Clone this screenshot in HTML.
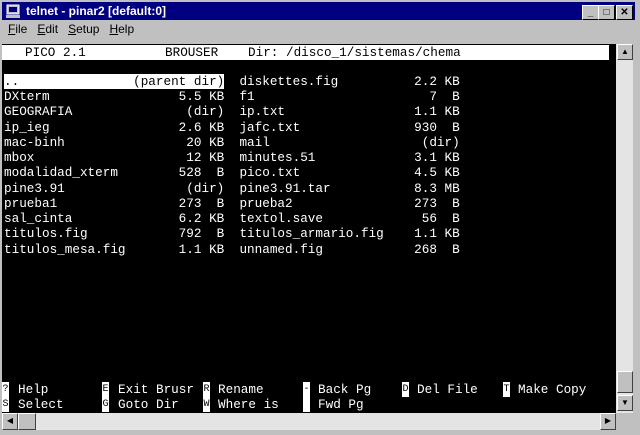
<!DOCTYPE html>
<html><head><style>
body{margin:0;width:640px;height:435px;background:#c0c0c0;overflow:hidden;position:relative;font-family:"Liberation Sans",sans-serif}
#title{position:absolute;left:2px;top:2px;width:633px;height:18px;background:#000080;color:#fff;font-weight:bold;font-size:12px;line-height:18px}
#title span{position:absolute;left:24px;top:0}
.btn{position:absolute;top:3px;width:15px;height:13px;background:#c0c0c0;border:1px solid;border-color:#fff #000 #000 #fff;color:#000;font-size:10px;line-height:13px;text-align:center}
#menu{position:absolute;left:8px;top:22px;font-size:12px;color:#000}
#menu span{margin-right:10px}
#term{position:absolute;left:2px;top:44px;width:614px;height:369px;background:#000;overflow:hidden}
.r{position:absolute;left:2px;height:15px;font-family:"Liberation Mono",monospace;font-size:12.67px;line-height:15px;color:#fff;white-space:pre}
.w{background:#fff;color:#000}
.k{position:absolute;width:7px;height:15px;background:#fff;color:#000;font-family:"Liberation Mono",monospace;font-size:10px;line-height:15px;text-align:center;overflow:hidden}
#vs{position:absolute;left:616px;top:44px;width:17px;height:369px;background:#e4e4e4}
.sb{position:absolute;background:#c0c0c0;border:1px solid;border-color:#fff #404040 #404040 #fff;box-sizing:border-box;font-size:8px;text-align:center;line-height:14px}
#hs{position:absolute;left:2px;top:413px;width:614px;height:17px;background:#e4e4e4}
</style></head><body>
<div id="title"><svg style="position:absolute;left:3px;top:2px" width="16" height="14"><rect x="2" y="1" width="12" height="9" fill="#c0c0c0" stroke="#fff"/><rect x="4" y="3" width="8" height="5" fill="#000080"/><rect x="1" y="11" width="14" height="3" fill="#c0c0c0"/></svg><span>telnet - pinar2 [default:0]</span>
<div class="btn" style="left:580px">_</div><div class="btn" style="left:596px">□</div><div class="btn" style="left:614px;font-weight:bold">✕</div></div>
<div id="menu"><span><u>F</u>ile</span><span><u>E</u>dit</span><span><u>S</u>etup</span><span><u>H</u>elp</span></div>
<div id="term">
<div class="w" style="position:absolute;top:1px;left:0;width:607px;height:15px"></div>
<div class="r w" style="top:1px;left:23px">PICO 2.1</div>
<div class="r w" style="top:1px;left:163px">BROUSER</div>
<div class="r w" style="top:1px;left:246px">Dir: /disco_1/sistemas/chema</div>
<div class="r" style="top:30px"><span class="w">..               (parent dir)</span>  diskettes.fig          2.2 KB</div>
<div class="r" style="top:45px">DXterm                 5.5 KB  f1                       7  B</div>
<div class="r" style="top:60px">GEOGRAFIA               (dir)  ip.txt                 1.1 KB</div>
<div class="r" style="top:76px">ip_ieg                 2.6 KB  jafc.txt               930  B</div>
<div class="r" style="top:91px">mac-binh                20 KB  mail                    (dir)</div>
<div class="r" style="top:106px">mbox                    12 KB  minutes.51             3.1 KB</div>
<div class="r" style="top:121px">modalidad_xterm        528  B  pico.txt               4.5 KB</div>
<div class="r" style="top:137px">pine3.91                (dir)  pine3.91.tar           8.3 MB</div>
<div class="r" style="top:152px">prueba1                273  B  prueba2                273  B</div>
<div class="r" style="top:167px">sal_cinta              6.2 KB  textol.save             56  B</div>
<div class="r" style="top:182px">titulos.fig            792  B  titulos_armario.fig    1.1 KB</div>
<div class="r" style="top:198px">titulos_mesa.fig       1.1 KB  unnamed.fig            268  B</div>

<div class="k" style="top:338px;left:0">?</div><div class="r" style="top:338px;left:16px">Help</div>
<div class="k" style="top:338px;left:100px">E</div><div class="r" style="top:338px;left:116px">Exit Brusr</div>
<div class="k" style="top:338px;left:201px">R</div><div class="r" style="top:338px;left:216px">Rename</div>
<div class="k" style="top:338px;left:301px">-</div><div class="r" style="top:338px;left:316px">Back Pg</div>
<div class="k" style="top:338px;left:400px">D</div><div class="r" style="top:338px;left:415px">Del File</div>
<div class="k" style="top:338px;left:501px">T</div><div class="r" style="top:338px;left:516px">Make Copy</div>
<div class="k" style="top:353px;left:0">S</div><div class="r" style="top:353px;left:16px">Select</div>
<div class="k" style="top:353px;left:100px">G</div><div class="r" style="top:353px;left:116px">Goto Dir</div>
<div class="k" style="top:353px;left:201px">W</div><div class="r" style="top:353px;left:216px">Where is</div>
<div class="k" style="top:353px;left:301px"> </div><div class="r" style="top:353px;left:316px">Fwd Pg</div>
</div>
<div id="vs"><div class="sb" style="left:1px;top:0;width:16px;height:16px">▲</div><div class="sb" style="left:1px;top:327px;width:16px;height:22px"></div><div class="sb" style="left:1px;top:351px;width:16px;height:16px">▼</div></div>
<div id="hs"><div class="sb" style="left:0;top:0;width:16px;height:17px">◀</div><div class="sb" style="left:16px;top:0;width:18px;height:17px"></div><div class="sb" style="left:598px;top:0;width:16px;height:17px">▶</div></div>
</body></html>
